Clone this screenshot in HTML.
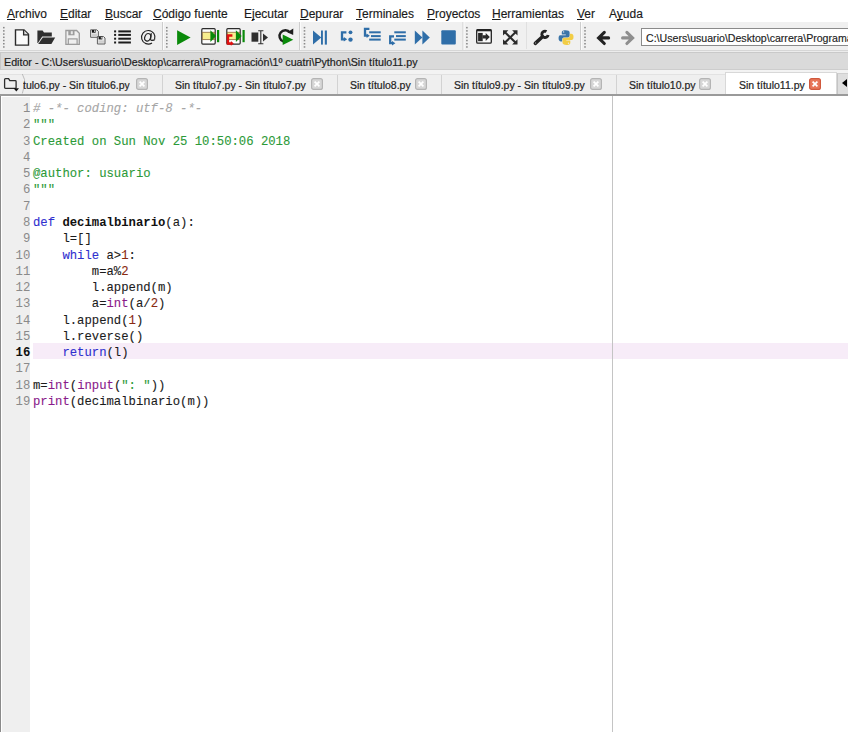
<!DOCTYPE html>
<html><head><meta charset="utf-8">
<style>
*{box-sizing:border-box}
html,body{margin:0;padding:0;width:848px;height:732px;overflow:hidden;background:#fff;font-family:"Liberation Sans",sans-serif}
.abs{position:absolute}
#menu{left:0;top:0;width:848px;height:22px;background:#fff}
#menu span{position:absolute;top:6.5px;font-size:12px;color:#1a1a1a;-webkit-text-stroke:0.15px #1a1a1a;line-height:14px;white-space:nowrap}
#menu u{text-decoration:underline;text-decoration-thickness:1px;text-underline-offset:1px;text-decoration-skip-ink:none}
#tb{left:0;top:22px;width:848px;height:28px;background:#f0f0f0}
#tbline{left:0;top:50px;width:848px;height:1px;background:#d6d6d6}
#tbline2{left:0;top:51px;width:848px;height:1px;background:#ececec}
.ico{position:absolute;top:28px;width:17px;height:17px}
.dots{position:absolute;top:27px;width:2px;height:20px;background-image:radial-gradient(circle,#a8a8a8 0.8px,transparent 1px);background-size:2px 3px}
.sep{position:absolute;top:25px;width:1px;height:23px;background:#dcdcdc}
#path{left:641px;top:28px;width:220px;height:18px;background:#fff;border:1px solid #8a8a8a;font-size:10.6px;line-height:18px;padding-left:4px;color:#222;white-space:nowrap;overflow:hidden;-webkit-text-stroke:0.15px #222}
#title{left:0;top:52px;width:848px;height:18px;background:#dadada;border-top:1px solid #c9c9c9;border-left:1px solid #c8c8c8;border-bottom:1px solid #cdcdcd}
#title span{position:absolute;left:3px;top:3px;-webkit-text-stroke:0.2px #222;font-size:10.7px;line-height:13px;color:#222;white-space:nowrap}
#tabs{left:0;top:70px;width:848px;height:25px;background:#efefef;border-top:4px solid #f3f3f3}
.tt{position:absolute;top:79px;font-size:10.5px;line-height:13px;color:#1e1e1e;white-space:nowrap;-webkit-text-stroke:0.2px #1e1e1e}
.tsep{position:absolute;top:75px;width:1px;height:19px;background:#d2d2d2}
.x{position:absolute;top:8px;width:11px;height:11px;background:#cfcfcf;border:1px solid #bdbdbd}
.x:before,.x:after{content:"";position:absolute;left:4px;top:1px;width:1.5px;height:8px;background:#fff;transform:rotate(45deg)}
.x:after{transform:rotate(-45deg)}
#tabline{left:0;top:94px;width:848px;height:2px;background:#9a9a9a}
#ed{left:0;top:96px;width:848px;height:636px;background:#fff}
#edb{left:0;top:96px;width:1px;height:636px;background:#8a8a8a}
#gut{left:2px;top:97px;width:28px;height:635px;background:#efefef}
#edge{left:612px;top:96px;width:1px;height:636px;background:#c4c4c4;z-index:2}
#cur{left:33px;top:343px;width:815px;height:16px;background:#f7ecf8}
#code{left:0;top:101px;font-family:"Liberation Mono",monospace;font-size:12.25px;line-height:16.28px;white-space:pre;color:#1b1b1b;-webkit-text-stroke:0.1px currentColor}
.ln{position:absolute;left:0;width:30.3px;text-align:right;color:#8a8a8a;-webkit-text-stroke:0}
.cl{position:absolute;left:33px}
.cm{color:#a6a6a6;font-style:italic}
.st{color:#2c9a38}
.kw{color:#2f2fcf}
.bi{color:#8a1a8a}
.nu{color:#8a2a10}
.df{font-weight:bold;color:#111;-webkit-text-stroke:0}
.cur16{color:#111;font-weight:bold}
</style></head><body>
<div id="menu" class="abs">
<span style="left:7px"><u>A</u>rchivo</span>
<span style="left:60px"><u>E</u>ditar</span>
<span style="left:105px"><u>B</u>uscar</span>
<span style="left:153px"><u>C</u>ódigo fuente</span>
<span style="left:244px">E<u>j</u>ecutar</span>
<span style="left:300px"><u>D</u>epurar</span>
<span style="left:356px"><u>T</u>erminales</span>
<span style="left:427px"><u>P</u>royectos</span>
<span style="left:492px"><u>H</u>erramientas</span>
<span style="left:577px"><u>V</u>er</span>
<span style="left:609px">A<u>y</u>uda</span>
</div>
<div id="tb" class="abs"></div>
<div id="tbline" class="abs"></div>
<div id="tbline2" class="abs"></div>
<svg class="abs" style="left:0;top:22px" width="848" height="28" viewBox="0 22 848 28"><rect x="162.0" y="22" width="1" height="28" fill="#cdcdcd"/><rect x="163.0" y="22" width="1" height="28" fill="#fbfbfb"/><rect x="299.0" y="22" width="1" height="28" fill="#cdcdcd"/><rect x="300.0" y="22" width="1" height="28" fill="#fbfbfb"/><rect x="462.5" y="22" width="1" height="28" fill="#cdcdcd"/><rect x="463.5" y="22" width="1" height="28" fill="#fbfbfb"/><rect x="526" y="22" width="1" height="27" fill="#e0e0e0"/><rect x="580.0" y="22" width="1" height="28" fill="#cdcdcd"/><rect x="581.0" y="22" width="1" height="28" fill="#fbfbfb"/><rect x="3.0" y="26.90" width="1.6" height="1.5" fill="#8a8a8a"/><rect x="3.0" y="30.12" width="1.6" height="1.5" fill="#8a8a8a"/><rect x="3.0" y="33.34" width="1.6" height="1.5" fill="#8a8a8a"/><rect x="3.0" y="36.56" width="1.6" height="1.5" fill="#8a8a8a"/><rect x="3.0" y="39.78" width="1.6" height="1.5" fill="#8a8a8a"/><rect x="3.0" y="43.00" width="1.6" height="1.5" fill="#8a8a8a"/><rect x="3.0" y="46.22" width="1.6" height="1.5" fill="#8a8a8a"/><rect x="166.0" y="26.90" width="1.6" height="1.5" fill="#8a8a8a"/><rect x="166.0" y="30.12" width="1.6" height="1.5" fill="#8a8a8a"/><rect x="166.0" y="33.34" width="1.6" height="1.5" fill="#8a8a8a"/><rect x="166.0" y="36.56" width="1.6" height="1.5" fill="#8a8a8a"/><rect x="166.0" y="39.78" width="1.6" height="1.5" fill="#8a8a8a"/><rect x="166.0" y="43.00" width="1.6" height="1.5" fill="#8a8a8a"/><rect x="166.0" y="46.22" width="1.6" height="1.5" fill="#8a8a8a"/><rect x="303.7" y="26.90" width="1.6" height="1.5" fill="#8a8a8a"/><rect x="303.7" y="30.12" width="1.6" height="1.5" fill="#8a8a8a"/><rect x="303.7" y="33.34" width="1.6" height="1.5" fill="#8a8a8a"/><rect x="303.7" y="36.56" width="1.6" height="1.5" fill="#8a8a8a"/><rect x="303.7" y="39.78" width="1.6" height="1.5" fill="#8a8a8a"/><rect x="303.7" y="43.00" width="1.6" height="1.5" fill="#8a8a8a"/><rect x="303.7" y="46.22" width="1.6" height="1.5" fill="#8a8a8a"/><rect x="466.09999999999997" y="26.90" width="1.6" height="1.5" fill="#8a8a8a"/><rect x="466.09999999999997" y="30.12" width="1.6" height="1.5" fill="#8a8a8a"/><rect x="466.09999999999997" y="33.34" width="1.6" height="1.5" fill="#8a8a8a"/><rect x="466.09999999999997" y="36.56" width="1.6" height="1.5" fill="#8a8a8a"/><rect x="466.09999999999997" y="39.78" width="1.6" height="1.5" fill="#8a8a8a"/><rect x="466.09999999999997" y="43.00" width="1.6" height="1.5" fill="#8a8a8a"/><rect x="466.09999999999997" y="46.22" width="1.6" height="1.5" fill="#8a8a8a"/><rect x="584.2" y="26.90" width="1.6" height="1.5" fill="#8a8a8a"/><rect x="584.2" y="30.12" width="1.6" height="1.5" fill="#8a8a8a"/><rect x="584.2" y="33.34" width="1.6" height="1.5" fill="#8a8a8a"/><rect x="584.2" y="36.56" width="1.6" height="1.5" fill="#8a8a8a"/><rect x="584.2" y="39.78" width="1.6" height="1.5" fill="#8a8a8a"/><rect x="584.2" y="43.00" width="1.6" height="1.5" fill="#8a8a8a"/><rect x="584.2" y="46.22" width="1.6" height="1.5" fill="#8a8a8a"/></svg>
<svg id="tbsvg" class="abs" style="left:0;top:22px" width="848" height="28" viewBox="0 22 848 28">
<!-- new file -->
<path d="M15.5 29.9 H24 L28.5 34.4 V45.1 H15.5 Z" fill="#fbfbfb" stroke="#2b2b2b" stroke-width="1.4" stroke-linejoin="miter"/>
<path d="M23.6 30 V34.8 H28.4" fill="#dcdcdc" stroke="#2b2b2b" stroke-width="1.3"/>
<!-- open folder -->
<path d="M37.4 30.6 H42.6 L44 32.6 H51.8 V36.4 H42.2 L38 43 H37.4 Z" fill="#2f2f2f"/>
<path d="M42.8 37.6 H55.2 L51.4 43.9 H38.2 Z" fill="#2f2f2f"/>
<!-- save gray -->
<path d="M65.9 30.5 H76.6 L79.3 33.2 V44.3 H65.9 Z" fill="#efefef" stroke="#9b9b9b" stroke-width="1.3"/>
<rect x="68.3" y="30.5" width="6.2" height="4.8" fill="#9b9b9b"/>
<rect x="70.8" y="31.2" width="2" height="3" fill="#e6e6e6"/>
<rect x="68.3" y="38.9" width="8.8" height="5.4" fill="#efefef" stroke="#9b9b9b" stroke-width="1.2"/>
<!-- save all -->
<path d="M90.6 29.8 H96.8 L98.4 31.4 V37.3 H90.6 Z" fill="#ececec" stroke="#5e5e5e" stroke-width="1"/>
<rect x="91.9" y="30" width="3.7" height="2.7" fill="#151515"/>
<rect x="94.1" y="30.3" width="1" height="1.6" fill="#ddd"/>
<rect x="91.7" y="33.7" width="5.6" height="2.4" fill="#cfcfcf"/>
<path d="M97.4 36.5 H103.5 L105 38 V44 H97.4 Z" fill="#ececec" stroke="#5e5e5e" stroke-width="1"/>
<rect x="98.6" y="36.7" width="3.7" height="2.7" fill="#151515"/>
<rect x="100.8" y="37" width="1" height="1.6" fill="#ddd"/>
<rect x="98.4" y="40.4" width="5.6" height="2.4" fill="#cfcfcf"/>
<!-- list -->
<g fill="#1c1c1c">
<rect x="114.1" y="30.4" width="2" height="2"/><rect x="118.3" y="30.4" width="12.6" height="2"/>
<rect x="114.1" y="33.9" width="2" height="2"/><rect x="118.3" y="33.9" width="12.6" height="2"/>
<rect x="114.1" y="37.7" width="2" height="2"/><rect x="118.3" y="37.7" width="12.6" height="2"/>
<rect x="114.1" y="41.5" width="2" height="2"/><rect x="118.3" y="41.5" width="12.6" height="2"/>
</g>
<!-- @ -->
<g fill="none" stroke="#1f1f1f" stroke-width="1.15">
<path d="M154.6 39.6 A6.75 6.75 0 1 0 152.0 42.9"/>
<ellipse cx="147.7" cy="37.3" rx="2.85" ry="3.85" transform="rotate(22 147.7 37.3)"/>
<path d="M151.3 33.1 L150.6 39.2 Q150.6 40.5 151.9 40.4 Q154.2 40.2 154.6 39.6"/>
</g>
<!-- run -->
<path d="M177.1 30.2 L190.6 37.6 L177.1 44.9 Z" fill="#0a8a0a"/>
<!-- run cell -->
<rect x="201.8" y="28.7" width="13.4" height="15.4" rx="1" fill="#fdfdfd" stroke="#2b2b2b" stroke-width="1.2"/>
<rect x="202.4" y="32.3" width="12.2" height="7.3" fill="#f8ee8e" stroke="#9a7a4a" stroke-width="0.9"/>
<path d="M210.4 30.3 L216.2 36.1 L210.4 41.9 Z" fill="#0a8a0a"/>
<rect x="217" y="30" width="2.2" height="12.2" fill="#0a8a0a"/>
<!-- run cell advance -->
<rect x="226.8" y="28.7" width="13.4" height="15.4" rx="1" fill="#fdfdfd" stroke="#2b2b2b" stroke-width="1.2"/>
<rect x="227.4" y="32.3" width="12.2" height="7.3" fill="#f8ee8e" stroke="#9a7a4a" stroke-width="0.9"/>
<path d="M232.4 35.6 H227.9 V43.4 H231.4" fill="none" stroke="#e01010" stroke-width="2.5"/>
<path d="M230.9 41 L233.8 43.4 L230.9 45.8 Z" fill="#e01010"/>
<path d="M235.9 30.3 L241.7 36.1 L235.9 41.9 Z" fill="#0a8a0a"/>
<rect x="242.5" y="30" width="2.2" height="12.2" fill="#0a8a0a"/>
<!-- run selection -->
<rect x="251.5" y="32.5" width="6.8" height="9.2" fill="#2f2f2f"/>
<path d="M258.2 30.7 H263.4 M260.8 30.7 V43.8 M258.2 43.8 H263.4" fill="none" stroke="#2f2f2f" stroke-width="1.1"/>
<path d="M263 33.4 L268 37.4 L263 41.4 Z" fill="#2f2f2f"/>
<!-- rerun -->
<path d="M290.05 32.67 A5.8 5.8 0 1 0 283.32 41.45" fill="none" stroke="#1f1f1f" stroke-width="2.4"/>
<path d="M287.2 32.2 L293.3 28.6 L293.2 34.9 Z" fill="#1f1f1f"/>
<path d="M282.7 34.6 L293.3 39.7 L282.7 44.9 Z" fill="#0a8a0a"/>
<!-- debug -->
<g fill="#2f6ea8">
<path d="M313 30.5 L321.3 37.6 L313 44.6 Z"/>
<rect x="321" y="30.5" width="1.9" height="14.1"/>
<rect x="324.8" y="30.5" width="2.1" height="14.1"/>
<!-- step -->
<path d="M346.4 32.4 H342 V39.3 H344.4" fill="none" stroke="#2f6ea8" stroke-width="2.3"/>
<path d="M343.8 37 L347.2 39.3 L343.8 41.6 Z"/>
<circle cx="350.5" cy="32.3" r="1.9"/>
<circle cx="350.5" cy="39.6" r="2.2"/>
<!-- step into -->
<path d="M369.4 28.9 H365 V35.6 H367" fill="none" stroke="#2f6ea8" stroke-width="2.3"/>
<path d="M366.6 33.6 L369.8 35.8 L366.6 38 Z"/>
<rect x="369.2" y="31.3" width="11.5" height="2"/>
<rect x="371" y="35.1" width="9.7" height="2"/>
<rect x="369.2" y="38.6" width="11.5" height="2"/>
<!-- step return -->
<path d="M394 36.4 H390.2 V43.2 H392.4" fill="none" stroke="#2f6ea8" stroke-width="2.3"/>
<path d="M392 41 L395.4 43.3 L392 45.5 Z"/>
<rect x="394.3" y="31.3" width="11.5" height="2"/>
<rect x="396" y="35.1" width="9.8" height="2"/>
<rect x="394.3" y="38.6" width="11.5" height="2"/>
<!-- continue -->
<path d="M414.8 30.5 L422.4 37.6 L414.8 44.6 Z"/>
<path d="M422.4 30.5 L429.8 37.6 L422.4 44.6 Z"/>
<!-- stop -->
<rect x="441.3" y="30.2" width="14.5" height="14.4" rx="1"/>
</g>
<!-- maximize pane -->
<rect x="476.7" y="29.6" width="14.6" height="13.5" rx="1.2" fill="#fafafa" stroke="#222" stroke-width="1.3"/>
<rect x="476.7" y="29.2" width="14.6" height="2.1" fill="#222"/>
<rect x="478.1" y="32.9" width="4.6" height="8.3" fill="#2a2a2a"/>
<path d="M482.5 35.2 H485.7 V33.1 L489.8 36.9 L485.7 40.9 V38.6 H482.5 Z" fill="#2a2a2a"/>
<!-- fullscreen -->
<g stroke="#2b2b2b" stroke-width="2.1" fill="none"><path d="M504.5 31.7 L516 43.1 M516 31.7 L504.5 43.1"/></g>
<g fill="#2b2b2b">
<path d="M503 30.2 H508.4 L503 35.6 Z"/><path d="M517.5 30.2 V35.6 L512.1 30.2 Z"/>
<path d="M503 44.6 V39.2 L508.4 44.6 Z"/><path d="M517.5 44.6 H512.1 L517.5 39.2 Z"/>
</g>
<!-- wrench -->
<path d="M535.3 43.4 L542.4 36.8" stroke="#232323" stroke-width="3.5" stroke-linecap="round"/>
<path d="M548.1 34.9 A3.15 3.15 0 1 1 546.5 31.6" fill="none" stroke="#232323" stroke-width="2.9"/>
<circle cx="535.6" cy="43.0" r="0.65" fill="#9a9a9a"/>
<!-- python -->
<path d="M565.5 30.2 C562 30.2 561.8 31.6 561.8 32.8 V34.6 H565.8 V35.3 H560.4 C558.6 35.3 558.6 37.2 558.6 38.6 C558.6 40.2 559.4 41.5 561 41.5 H562.2 V39.4 C562.2 38 563.3 37.5 564.5 37.5 H567.8 C569 37.5 569.6 36.8 569.6 35.6 V32.6 C569.6 31 568.3 30.2 565.5 30.2 Z" fill="#3b75a8"/>
<circle cx="563.6" cy="31.9" r="0.7" fill="#eaeaea"/>
<path d="M566.6 45 C570.1 45 570.3 43.6 570.3 42.4 V40.6 H566.3 V39.9 H571.7 C573.5 39.9 573.5 38 573.5 36.6 C573.5 35 572.7 33.7 571.1 33.7 H569.9 V35.8 C569.9 37.2 568.8 37.7 567.6 37.7 H564.3 C563.1 37.7 562.5 38.4 562.5 39.6 V42.6 C562.5 44.2 563.8 45 566.6 45 Z" fill="#f2cd45"/>
<circle cx="568.5" cy="43.3" r="0.7" fill="#eaeaea"/>
<!-- back / fwd -->
<path d="M608.6 37.9 H599.8 M604.3 32.4 L598.6 37.9 L604.3 43.5" fill="none" stroke="#232323" stroke-width="3.1" stroke-linecap="round" stroke-linejoin="miter"/>
<path d="M622.6 37.9 H631.4 M626.9 32.4 L632.6 37.9 L626.9 43.5" fill="none" stroke="#8e8e8e" stroke-width="3.1" stroke-linecap="round" stroke-linejoin="miter"/>
</svg>
<div id="path" class="abs">C:\Users\usuario\Desktop\carrera\Programación\1º cuatri\Python</div>

<div id="title" class="abs"><span>Editor - C:\Users\usuario\Desktop\carrera\Programación\1º cuatri\Python\Sin título11.py</span></div>
<div id="tabs" class="abs"></div>
<div class="abs" style="left:0;top:74px;width:848px;height:1px;background:#e2e2e2"></div>
<svg class="abs" style="left:0;top:74px" width="30" height="20" viewBox="0 74 30 20"><path d="M4.6 80.7 V79.6 Q4.6 78.7 5.5 78.7 H8.6 L9.8 80.7 H15.3 Q16.1 80.7 16.1 81.5 V87.5 Q16.1 88.3 15.3 88.3 H5.5 Q4.6 88.3 4.6 87.5 Z" fill="none" stroke="#2e2e2e" stroke-width="1.3"/><path d="M13.6 88.2 H19 L16.3 91.4 Z" fill="#111"/><path d="M22.3 74 Q25.6 80 24.6 84 Q23.6 89 22.3 93.5" fill="none" stroke="#b0b0b0" stroke-width="0.8"/></svg>
<div class="tt" style="left:23px;clip-path:inset(0 0 0 0)">tulo6.py - Sin título6.py</div><svg class="abs" style="left:136px;top:78px" width="12" height="12" viewBox="0 0 12 12"><rect x="0.6" y="0.6" width="10.8" height="10.8" rx="2" fill="#d7d7d7" stroke="#b4b4b4" stroke-width="1.2"/><path d="M3.6 3.6 L8.4 8.4 M8.4 3.6 L3.6 8.4" stroke="#fff" stroke-width="1.7"/></svg>
<div class="tsep" style="left:162px"></div>
<div class="tt" style="left:175px">Sin título7.py - Sin título7.py</div><svg class="abs" style="left:311px;top:78px" width="12" height="12" viewBox="0 0 12 12"><rect x="0.6" y="0.6" width="10.8" height="10.8" rx="2" fill="#d7d7d7" stroke="#b4b4b4" stroke-width="1.2"/><path d="M3.6 3.6 L8.4 8.4 M8.4 3.6 L3.6 8.4" stroke="#fff" stroke-width="1.7"/></svg>
<div class="tsep" style="left:337px"></div>
<div class="tt" style="left:350px">Sin título8.py</div><svg class="abs" style="left:415px;top:78px" width="12" height="12" viewBox="0 0 12 12"><rect x="0.6" y="0.6" width="10.8" height="10.8" rx="2" fill="#d7d7d7" stroke="#b4b4b4" stroke-width="1.2"/><path d="M3.6 3.6 L8.4 8.4 M8.4 3.6 L3.6 8.4" stroke="#fff" stroke-width="1.7"/></svg>
<div class="tsep" style="left:441px"></div>
<div class="tt" style="left:454px">Sin título9.py - Sin título9.py</div><svg class="abs" style="left:590px;top:78px" width="12" height="12" viewBox="0 0 12 12"><rect x="0.6" y="0.6" width="10.8" height="10.8" rx="2" fill="#d7d7d7" stroke="#b4b4b4" stroke-width="1.2"/><path d="M3.6 3.6 L8.4 8.4 M8.4 3.6 L3.6 8.4" stroke="#fff" stroke-width="1.7"/></svg>
<div class="tsep" style="left:616px"></div>
<div class="tt" style="left:629px">Sin título10.py</div><svg class="abs" style="left:699px;top:78px" width="12" height="12" viewBox="0 0 12 12"><rect x="0.6" y="0.6" width="10.8" height="10.8" rx="2" fill="#d7d7d7" stroke="#b4b4b4" stroke-width="1.2"/><path d="M3.6 3.6 L8.4 8.4 M8.4 3.6 L3.6 8.4" stroke="#fff" stroke-width="1.7"/></svg>
<div class="abs" style="left:725px;top:72px;width:112px;height:23px;background:#fff;border:1px solid #d8d8d8;border-bottom:none"></div>
<div class="tt" style="left:739px">Sin título11.py</div><svg class="abs" style="left:809px;top:78px" width="12" height="12" viewBox="0 0 12 12"><rect x="0.6" y="0.6" width="10.8" height="10.8" rx="2" fill="#e8775a" stroke="#d0583c" stroke-width="1.2"/><path d="M3.6 3.6 L8.4 8.4 M8.4 3.6 L3.6 8.4" stroke="#fff" stroke-width="1.7"/></svg>
<div class="abs" style="left:837px;top:73px;width:15px;height:21px;background:#dedede;border-left:1px solid #c4c4c4;border-top:1px solid #cfcfcf"></div>
<svg class="abs" style="left:840px;top:78px" width="8" height="10" viewBox="0 0 8 10"><path d="M2 5 L7 1 V9 Z" fill="#000"/></svg>
<div id="tabline" class="abs"></div>
<div id="ed" class="abs"></div>
<div id="edb" class="abs"></div>
<div id="gut" class="abs"></div>
<div id="edge" class="abs"></div>
<div id="cur" class="abs"></div>
<div id="code" class="abs">
<div class="ln" style="top:0.00px">1</div><div class="cl" style="top:0.00px"><span class="cm"># -*- coding: utf-8 -*-</span></div>
<div class="ln" style="top:16.28px">2</div><div class="cl" style="top:16.28px"><span class="st">"""</span></div>
<div class="ln" style="top:32.56px">3</div><div class="cl" style="top:32.56px"><span class="st">Created on Sun Nov 25 10:50:06 2018</span></div>
<div class="ln" style="top:48.84px">4</div><div class="cl" style="top:48.84px"></div>
<div class="ln" style="top:65.12px">5</div><div class="cl" style="top:65.12px"><span class="st">@author: usuario</span></div>
<div class="ln" style="top:81.40px">6</div><div class="cl" style="top:81.40px"><span class="st">"""</span></div>
<div class="ln" style="top:97.68px">7</div><div class="cl" style="top:97.68px"></div>
<div class="ln" style="top:113.96px">8</div><div class="cl" style="top:113.96px"><span class="kw">def</span> <span class="df">decimalbinario</span>(a):</div>
<div class="ln" style="top:130.24px">9</div><div class="cl" style="top:130.24px">    l=[]</div>
<div class="ln" style="top:146.52px">10</div><div class="cl" style="top:146.52px">    <span class="kw">while</span> a&gt;<span class="nu">1</span>:</div>
<div class="ln" style="top:162.80px">11</div><div class="cl" style="top:162.80px">        m=a%<span class="nu">2</span></div>
<div class="ln" style="top:179.08px">12</div><div class="cl" style="top:179.08px">        l.append(m)</div>
<div class="ln" style="top:195.36px">13</div><div class="cl" style="top:195.36px">        a=<span class="bi">int</span>(a/<span class="nu">2</span>)</div>
<div class="ln" style="top:211.64px">14</div><div class="cl" style="top:211.64px">    l.append(<span class="nu">1</span>)</div>
<div class="ln" style="top:227.92px">15</div><div class="cl" style="top:227.92px">    l.reverse()</div>
<div class="ln cur16" style="top:244.20px">16</div><div class="cl" style="top:244.20px">    <span class="kw">return</span>(l)</div>
<div class="ln" style="top:260.48px">17</div><div class="cl" style="top:260.48px"></div>
<div class="ln" style="top:276.76px">18</div><div class="cl" style="top:276.76px">m=<span class="bi">int</span>(<span class="bi">input</span>(<span class="st">": "</span>))</div>
<div class="ln" style="top:293.04px">19</div><div class="cl" style="top:293.04px"><span class="bi">print</span>(decimalbinario(m))</div>
</div>
</body></html>
